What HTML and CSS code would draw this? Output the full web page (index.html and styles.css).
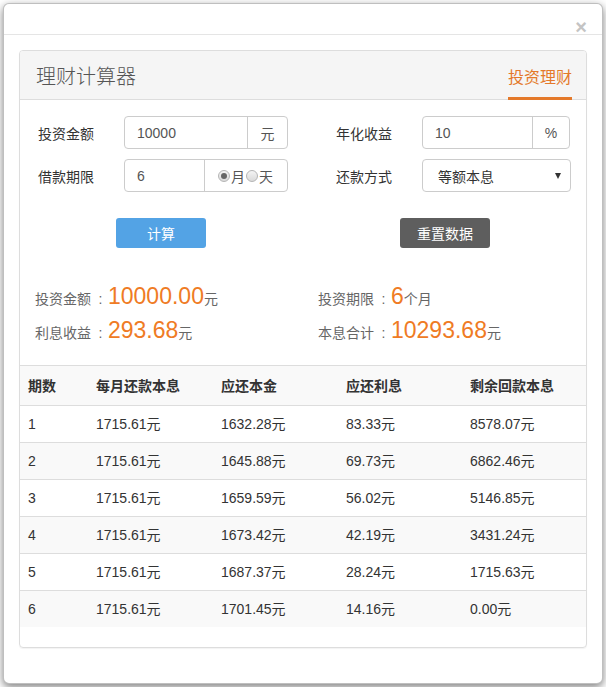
FILE: index.html
```html
<!DOCTYPE html>
<html lang="zh-CN">
<head>
<meta charset="utf-8">
<title>理财计算器</title>
<link rel="stylesheet" href="styles.css">
</head>
<body>
<div class="modal">
  <div class="modal-header"><span class="close">×</span></div>
  <div class="modal-body">
    <div class="panel">
      <div class="panel-head">
        <div class="title">理财计算器</div>
        <div class="tab">投资理财</div>
      </div>
      <div class="form">
        <div class="label">投资金额</div>
        <div class="group g-left">
          <div class="inp">10000</div>
          <div class="addon">元</div>
        </div>
        <div class="spacer"></div>
        <div class="label">年化收益</div>
        <div class="group g-right">
          <div class="inp">10</div>
          <div class="addon addon-pct">%</div>
        </div>

        <div class="label">借款期限</div>
        <div class="group g-left">
          <div class="inp inp-short">6</div>
          <div class="addon addon-radio">
            <span class="radio checked"></span><span>月</span><span class="radio"></span><span>天</span>
          </div>
        </div>
        <div class="spacer"></div>
        <div class="label">还款方式</div>
        <div class="select">
          <span>等额本息</span>
          <span class="caret"></span>
        </div>
      </div>
      <div class="buttons">
        <div class="half"><button class="btn btn-blue">计算</button></div>
        <div class="half"><button class="btn btn-gray">重置数据</button></div>
      </div>
      <div class="results">
        <div class="res">投资金额<span class="colon">:</span><span class="num">10000.00</span>元</div>
        <div class="res">投资期限<span class="colon">:</span><span class="num">6</span>个月</div>
        <div class="res">利息收益<span class="colon">:</span><span class="num">293.68</span>元</div>
        <div class="res">本息合计<span class="colon">:</span><span class="num">10293.68</span>元</div>
      </div>
      <table class="table">
        <thead>
          <tr><th class="c1">期数</th><th>每月还款本息</th><th>应还本金</th><th>应还利息</th><th>剩余回款本息</th></tr>
        </thead>
        <tbody>
          <tr><td>1</td><td>1715.61元</td><td>1632.28元</td><td>83.33元</td><td>8578.07元</td></tr>
          <tr><td>2</td><td>1715.61元</td><td>1645.88元</td><td>69.73元</td><td>6862.46元</td></tr>
          <tr><td>3</td><td>1715.61元</td><td>1659.59元</td><td>56.02元</td><td>5146.85元</td></tr>
          <tr><td>4</td><td>1715.61元</td><td>1673.42元</td><td>42.19元</td><td>3431.24元</td></tr>
          <tr><td>5</td><td>1715.61元</td><td>1687.37元</td><td>28.24元</td><td>1715.63元</td></tr>
          <tr><td>6</td><td>1715.61元</td><td>1701.45元</td><td>14.16元</td><td>0.00元</td></tr>
        </tbody>
      </table>
    </div>
  </div>
</div>
</body>
</html>
```

FILE: styles.css
```css
* { box-sizing: border-box; }
html, body {
  margin: 0;
  padding: 0;
  background: #fff;
}
body {
  font-family: "Liberation Sans", Arial, "Noto Sans CJK SC", sans-serif;
  font-size: 14px;
  color: #333;
  padding: 3px;
}
.modal {
  width: 600px;
  height: 681px;
  background: #fff;
  border: 1px solid rgba(0,0,0,0.25);
  border-radius: 6px;
  box-shadow: 0 3px 9px rgba(0,0,0,0.5);
  display: flex;
  flex-direction: column;
}
.modal-header {
  height: 31px;
  border-bottom: 1px solid #e5e5e5;
  display: flex;
  justify-content: flex-end;
  align-items: flex-end;
  padding-right: 15px;
}
.close {
  font-size: 20px;
  font-weight: bold;
  line-height: 1;
  color: #c4c4c4;
  margin-bottom: -3px;
}
.modal-body {
  padding: 15px 15px 0 15px;
}
.panel {
  border: 1px solid #ddd;
  border-radius: 4px;
  box-shadow: 0 1px 1px rgba(0,0,0,0.05);
  padding-bottom: 20px;
}
.panel-head {
  height: 49px;
  background: #f5f5f5;
  border-bottom: 1px solid #ddd;
  border-radius: 3px 3px 0 0;
  display: flex;
  justify-content: space-between;
  align-items: stretch;
  padding: 0 14px 0 16px;
}
.title {
  font-size: 20px;
  color: #555;
  display: flex;
  align-items: center;
  font-family: "Noto Sans CJK SC", sans-serif;
  font-weight: 300;
}
.tab {
  font-size: 16px;
  color: #e4792a;
  display: flex;
  align-items: center;
  border-bottom: 3px solid #e4792a;
  margin-bottom: -1px;
  padding-top: 3px;
}
.form {
  display: grid;
  grid-template-columns: 86px 164px 48px 86px 149px;
  grid-auto-rows: 33px;
  row-gap: 10px;
  padding: 16px 0 0 18px;
  align-items: center;
}
.label {
  font-size: 14px;
  color: #333;
}
.group {
  display: flex;
  height: 33px;
  border: 1px solid #ccc;
  border-radius: 4px;
  color: #555;
}
.g-right { width: 148px; }
.inp {
  flex: 1;
  display: flex;
  align-items: center;
  padding-left: 12px;
}
.inp-short { flex: 0 0 79px; }
.addon {
  width: 40px;
  border-left: 1px solid #ccc;
  display: flex;
  align-items: center;
  justify-content: center;
}
.addon-pct { width: 37px; }
.addon-radio {
  flex: 1;
  justify-content: flex-start;
  padding-left: 12px;
}
.radio {
  width: 12px;
  height: 12px;
  border-radius: 50%;
  border: 1px solid #b5b5b5;
  background: linear-gradient(#f4f4f4, #dadada);
  display: inline-flex;
  align-items: center;
  justify-content: center;
  margin: 0 1px 0 1px;
}
.radio.checked::after {
  content: "";
  width: 6px;
  height: 6px;
  border-radius: 50%;
  background: #666;
}
.select {
  height: 33px;
  border: 1px solid #ccc;
  border-radius: 4px;
  color: #333;
  display: flex;
  align-items: center;
  justify-content: space-between;
  padding: 0 9px 0 15px;
}
.caret {
  width: 0;
  height: 0;
  border-left: 3.5px solid transparent;
  border-right: 3.5px solid transparent;
  border-top: 6px solid #333;
}
.buttons {
  display: flex;
  margin-top: 26px;
}
.half {
  flex: 1;
  display: flex;
  justify-content: center;
}
.btn {
  width: 90px;
  height: 30px;
  border: none;
  border-radius: 3px;
  color: #fff;
  font-family: inherit;
  font-size: 14px;
  padding: 0;
}
.btn-blue { background: #53a3e5; margin-left: -1px; }
.btn-gray { background: #5e5e5e; margin-left: 1px; }
.results {
  display: grid;
  grid-template-columns: 1fr 1fr;
  grid-auto-rows: 34px;
  padding: 0 0 0 15px;
  margin-top: 31px;
  column-gap: 15px;
}
.res {
  color: #666;
  font-size: 14px;
  display: flex;
  align-items: baseline;
  padding-top: 4px;
}
.colon {
  width: 15px;
  text-align: center;
  margin-left: 2px;
}
.num {
  color: #ef7b24;
  font-size: 23px;
  margin-left: 0;
}
.table {
  width: 100%;
  border-collapse: collapse;
  margin-top: 18px;
  border-top: 1px solid #ddd;
}
.table th, .table td {
  text-align: left;
  padding: 8px 8px;
  line-height: 20px;
  border-bottom: 1px solid #ddd;
  color: #333;
}
.table th {
  font-weight: bold;
  padding: 10px 8px 9px;
  line-height: 20px;
  height: 40px;
  background: #f9f9f9;
}
.table tr:last-child td { border-bottom: none; }
.table tbody tr:nth-child(even) td { background: #f9f9f9; }
.table th:nth-child(1) { width: 68px; }
.table th:nth-child(2) { width: 125px; }
.table th:nth-child(3) { width: 125px; }
.table th:nth-child(4) { width: 124px; }
```
